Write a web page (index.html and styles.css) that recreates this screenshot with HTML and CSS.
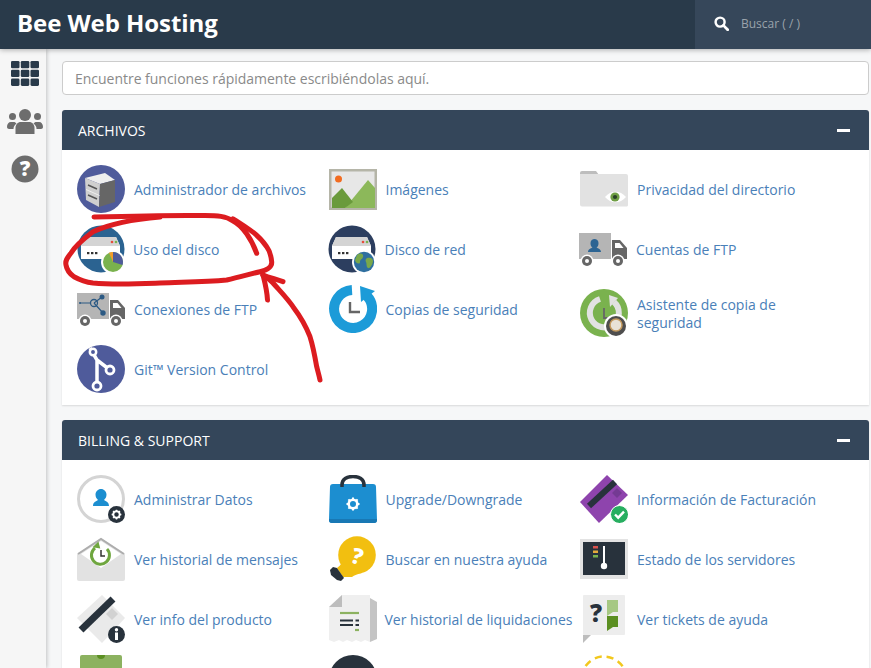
FILE: index.html
```html
<!DOCTYPE html>
<html lang="es">
<head>
<meta charset="utf-8">
<title>Bee Web Hosting</title>
<link rel="stylesheet" href="styles.css">
</head>
<body>
<svg class="defs" width="0" height="0" aria-hidden="true">
  <symbol id="server" viewBox="0 0 48 48">
    <path d="M8 12h31l4 9v13H4V21z" fill="#fff"/>
    <path d="M8 12h31l4 9H4z" fill="#d4d4d4"/>
    <rect x="10" y="27" width="2.400" height="2.200" fill="#333"/><rect x="14" y="27" width="2.400" height="2.200" fill="#333"/><rect x="18" y="27" width="2.400" height="2.200" fill="#333"/>
    <circle cx="35" cy="17" r="1.300" fill="#e74c3c"/><circle cx="39" cy="17" r="1.300" fill="#7ab24e"/>
  </symbol>
  <symbol id="truck" viewBox="0 0 48 48">
    <rect x="0" y="8" width="32" height="26" fill="#b5b5b5"/>
    <path d="M33 15h8l7 8v11H33z" fill="#666"/>
    <path d="M36 18h4.500l4 5H36z" fill="#fff"/>
    <circle cx="8" cy="36" r="6.500" fill="#fff"/><circle cx="8" cy="36" r="5" fill="#666"/><circle cx="8" cy="36" r="2" fill="#fff"/>
    <circle cx="39" cy="36" r="6.500" fill="#fff"/><circle cx="39" cy="36" r="5" fill="#666"/><circle cx="39" cy="36" r="2" fill="#fff"/>
  </symbol>
  <symbol id="gear" viewBox="0 0 16 16">
    <circle cx="8" cy="8" r="4.300" fill="none" stroke="#fff" stroke-width="2.600"/>
    <path d="M8 1.500v13M1.500 8h13M3.400 3.400l9.200 9.200M12.600 3.400l-9.200 9.200" stroke="#fff" stroke-width="2" stroke-dasharray="2.400 8.200"/>
  </symbol>
</svg>

<header class="topbar">
  <div class="brand">Bee Web Hosting</div>
  <div class="quick-search">
    <svg class="search-icon" viewBox="0 0 16 16"><circle cx="6.500" cy="6.500" r="4.800" fill="none" stroke="#fff" stroke-width="2.600"/><path d="M10 10l4.600 4.600" stroke="#fff" stroke-width="3" stroke-linecap="round"/></svg>
    <span class="search-label">Buscar ( / )</span>
  </div>
</header>

<div class="shell">
  <nav class="sidebar">
    <svg class="side-icon grid-icon" viewBox="0 0 28 25">
      <g fill="#293a4a"><rect width="8.500" height="7.300" rx="1.300"/><rect x="9.800" width="8.500" height="7.300" rx="1.300"/><rect x="19.500" width="8.500" height="7.300" rx="1.300"/><rect y="8.800" width="8.500" height="7.300" rx="1.300"/><rect x="9.800" y="8.800" width="8.500" height="7.300" rx="1.300"/><rect x="19.500" y="8.800" width="8.500" height="7.300" rx="1.300"/><rect y="17.600" width="8.500" height="7.300" rx="1.300"/><rect x="9.800" y="17.600" width="8.500" height="7.300" rx="1.300"/><rect x="19.500" y="17.600" width="8.500" height="7.300" rx="1.300"/></g>
    </svg>
    <svg class="side-icon users-icon" viewBox="0 0 36 25">
      <g fill="#6d6d6d"><circle cx="18" cy="6" r="6"/><circle cx="5.500" cy="7.500" r="3.500"/><circle cx="30.500" cy="7.500" r="3.500"/><path d="M8.500 25v-6c0-4 3-6 5-6h9c2 0 5 2 5 6v6z"/><path d="M0 18c0-3 1.500-5 4-5h3.500c1 .6 1.500 1 2 1.500-2 1.500-3 3-3 5.500H2c-1 0-2-1-2-2zM36 18c0-3-1.500-5-4-5h-3.500c-1 .6-1.500 1-2 1.500 2 1.500 3 3 3 5.500H34c1 0 2-1 2-2z"/></g>
    </svg>
    <svg class="side-icon help-icon" viewBox="0 0 28 28"><circle cx="14" cy="14" r="13.500" fill="#6d6d6d"/><text x="14" y="21" text-anchor="middle" class="help-mark">?</text></svg>
  </nav>

  <main class="content">
    <input class="filter" type="text" placeholder="Encuentre funciones rápidamente escribiéndolas aquí.">

    <section class="panel">
      <div class="panel-head"><h2>ARCHIVOS</h2><span class="collapse"></span></div>
      <div class="panel-body">
        <a class="item">
          <svg class="ico" viewBox="0 0 48 48"><circle cx="24" cy="24" r="24" fill="#4f5b9b"/><path d="M8 13l20-5 10 7-15 4z" fill="#eee"/><path d="M8 13l15 6-1 23-13-7z" fill="#cfcfcf"/><path d="M23 19l15-4v22l-16 5z" fill="#666"/><path d="M11 20l9 4M11 30l9 4" stroke="#555" stroke-width="1.500"/><path d="M9 24.500l13.500 6" stroke="#eee" stroke-width="1"/></svg>
          <span>Administrador de archivos</span>
        </a>
        <a class="item">
          <svg class="ico" viewBox="0 0 48 48"><rect y="4" width="48" height="41" fill="#b5b5a8"/><rect x="2.500" y="6.500" width="43" height="36" fill="#e7e7e7"/><circle cx="9.500" cy="14" r="3.500" fill="#f26c21"/><path d="M16 43l23-28 7 8v20z" fill="#8cb85a"/><path d="M3 43V33l10-10 11 14-8 6z" fill="#6a9a3c"/></svg>
          <span>Imágenes</span>
        </a>
        <a class="item">
          <svg class="ico" viewBox="0 0 48 48"><path d="M0 8a2 2 0 0 1 2-2h14l3 4H0z" fill="#bdbdbd"/><path d="M0 9h46a2 2 0 0 1 2 2v29a1.500 1.500 0 0 1-2 1.500H2a2 2 0 0 1-2-2z" fill="#e2e2e2"/><path d="M25 32c6-7 15-7 21 0-6 7-15 7-21 0z" fill="#fff"/><circle cx="35" cy="32" r="4.600" fill="#6f9e44"/><circle cx="35" cy="32" r="2.100" fill="#294027"/></svg>
          <span>Privacidad del directorio</span>
        </a>

        <a class="item tight">
          <svg class="ico" viewBox="0 0 48 48"><circle cx="24" cy="24" r="23.500" fill="#2b6391"/><use href="#server" width="48" height="48"/><circle cx="36" cy="37" r="12" fill="#fff"/><circle cx="36" cy="37" r="10" fill="#7ab24e"/><path d="M36 37V27a10 10 0 0 1 9.500 13z" fill="#4f5b9b"/><path d="M36 37V27a10 10 0 0 0-4 .8z" fill="#f39c2c"/></svg>
          <span>Uso del disco</span>
        </a>
        <a class="item shift">
          <svg class="ico" viewBox="0 0 48 48"><circle cx="24" cy="24" r="23.500" fill="#2c3e5f"/><use href="#server" width="48" height="48"/><circle cx="36" cy="37" r="12" fill="#fff"/><circle cx="36" cy="37" r="10.200" fill="#2f6f9f"/><path d="M29 30c4-3 7-1 6 2s-3 2-3 5-5 1-5-2zM39 33c3-1 6 0 6 3s-3 8-5 7-1-4-2-6 0-3 1-4z" fill="#79a84a"/></svg>
          <span>Disco de red</span>
        </a>
        <a class="item shift">
          <svg class="ico" viewBox="0 0 48 48"><use href="#truck" width="48" height="48"/><path d="M9 27c0-3 3-3.500 4.500-4.500-1.500-1-2-2.500-2-4.500 0-2.500 2-4 4-4s4 1.500 4 4c0 2-.5 3.500-2 4.500 1.500 1 4.500 1.500 4.500 4.500z" fill="#2c6493"/></svg>
          <span>Cuentas de FTP</span>
        </a>

        <a class="item">
          <svg class="ico" viewBox="0 0 48 48"><use href="#truck" width="48" height="48"/><path d="M3 18h11M17 18l8-6M17 18l9 10" stroke="#2c5a84" stroke-width="1.200" fill="none"/><circle cx="17" cy="18" r="3.500" fill="none" stroke="#2c5a84" stroke-width="1.300"/><circle cx="25" cy="12" r="2.500" fill="#2c5a84"/><circle cx="26" cy="28" r="2.700" fill="#2c5a84"/><circle cx="3" cy="18" r="1" fill="#2c5a84"/></svg>
          <span>Conexiones de FTP</span>
        </a>
        <a class="item">
          <svg class="ico" viewBox="0 0 48 48"><path d="M23 5A19 19 0 1 0 38 11" fill="none" stroke="#1c9bd8" stroke-width="10"/><path d="M31 1l15 5-14 11z" fill="#1c9bd8"/><path d="M21 17v10h10" fill="none" stroke="#666" stroke-width="2.400"/></svg>
          <span>Copias de seguridad</span>
        </a>
        <a class="item low">
          <svg class="ico" viewBox="0 0 48 48"><circle cx="24" cy="24" r="24" fill="#7ab24e"/><path d="M20 10A14.500 14.500 0 1 0 34 13" fill="none" stroke="#e2e2e2" stroke-width="6"/><path d="M29 6l9 3-8 9z" fill="#e2e2e2"/><path d="M24 19v10h9" fill="none" stroke="#666" stroke-width="1.800"/><circle cx="36" cy="37" r="12" fill="#fff"/><circle cx="36" cy="37" r="10" fill="#4e4e4e"/><circle cx="36" cy="36" r="6" fill="#e8e2d6" stroke="#c49a5e" stroke-width="1.500"/></svg>
          <span>Asistente de copia de seguridad</span>
        </a>

        <a class="item">
          <svg class="ico" viewBox="0 0 48 48"><circle cx="24" cy="24" r="24" fill="#4f5b9b"/><path d="M13 3l7 12v27M20 15l13 10" fill="none" stroke="#fff" stroke-width="3.500"/><circle cx="16" cy="7" r="3.200" fill="#4f5b9b" stroke="#fff" stroke-width="2.500"/><circle cx="33" cy="25" r="4" fill="#4f5b9b" stroke="#fff" stroke-width="2.800"/><circle cx="20" cy="41" r="4" fill="#4f5b9b" stroke="#fff" stroke-width="2.800"/></svg>
          <span>Git™ Version Control</span>
        </a>
      </div>
    </section>

    <section class="panel">
      <div class="panel-head"><h2>BILLING &amp; SUPPORT</h2><span class="collapse"></span></div>
      <div class="panel-body">
        <a class="item">
          <svg class="ico" viewBox="0 0 48 48"><circle cx="24" cy="24" r="22.500" fill="none" stroke="#d4d4d4" stroke-width="3"/><path d="M16 31c0-4 3-4.500 5-6-1.500-1.500-2.500-3-2.500-5.500 0-3 2.500-5.500 5.500-5.500s5.500 2.500 5.500 5.500c0 2.500-1 4-2.500 5.500 2 1.500 5 2 5 6z" fill="#1c8ed0"/><circle cx="39.500" cy="39.500" r="8.500" fill="#28323c"/><use href="#gear" x="33.500" y="33.500" width="12" height="12"/></svg>
          <span>Administrar Datos</span>
        </a>
        <a class="item">
          <svg class="ico" viewBox="0 0 48 48"><path d="M1 12a3 3 0 0 1 3-3h40a3 3 0 0 1 3 3l1 33a3 3 0 0 1-3 3H3a3 3 0 0 1-3-3z" fill="#1c8ed0"/><path d="M0 44h48v1a3 3 0 0 1-3 3H3a3 3 0 0 1-3-3z" fill="#1878b4"/><path d="M13 12V10C13 4 18 1.500 24 1.500S35 4 35 10v2" fill="none" stroke="#28323c" stroke-width="3.500"/><use href="#gear" x="16" y="21" width="16" height="16"/></svg>
          <span>Upgrade/Downgrade</span>
        </a>
        <a class="item">
          <svg class="ico" viewBox="0 0 48 48"><path d="M27 0l21 20-29 28L0 27z" fill="#8e44ad"/><path d="M6 28L32 4" stroke="#28323c" stroke-width="6" transform="translate(3 3)"/><path d="M32 18l5-5 5 5-5 5z" fill="#743a93"/><circle cx="39.500" cy="39.500" r="9" fill="#27ae60" stroke="#fff" stroke-width="1"/><path d="M35 39.500l3.200 3.200 5.800-6" fill="none" stroke="#fff" stroke-width="2.400"/></svg>
          <span>Información de Facturación</span>
        </a>

        <a class="item">
          <svg class="ico" viewBox="0 0 48 48"><path d="M0 19L24 3l24 16v25a2 2 0 0 1-2 2H2a2 2 0 0 1-2-2z" fill="#e2e2e2"/><path d="M1 19L24 4l23 15" fill="none" stroke="#adadad" stroke-width="2"/><path d="M24 6l20 13-20 14L4 19z" fill="#fff"/><path d="M18 13A9 9 0 1 0 30 14" fill="none" stroke="#6fa63f" stroke-width="3"/><path d="M16 8l7 2-5 6z" fill="#6fa63f" transform="rotate(60 20 12)"/><path d="M24 15v6h4" fill="none" stroke="#333" stroke-width="1.500"/></svg>
          <span>Ver historial de mensajes</span>
        </a>
        <a class="item">
          <svg class="ico" viewBox="0 0 48 48"><path d="M14 42l-6-9c2-2 4-3 5-6l20 11c-4 1-8 2-10 4z" fill="#f2bf10"/><circle cx="28" cy="20" r="18.800" fill="#f2bf10"/><path d="M8 33l7 10-3 3-4-1-6-5-1-5 3-3z" fill="#28323c"/><text x="28" y="29" text-anchor="middle" class="bulb-mark" transform="rotate(18 28 22)">?</text></svg>
          <span>Buscar en nuestra ayuda</span>
        </a>
        <a class="item">
          <svg class="ico" viewBox="0 0 48 48"><path d="M0 4h48v40H0z" fill="#e3e3e3"/><rect x="3" y="7" width="42" height="33" fill="#28323c"/><rect x="13" y="11" width="5" height="2.500" fill="#d9534f"/><rect x="13" y="15.500" width="5" height="2.500" fill="#e5a93b"/><rect x="13" y="20" width="5" height="2.500" fill="#7ab24e"/><rect x="23" y="11" width="2" height="17" fill="#fff"/><circle cx="24" cy="31" r="3.200" fill="#fff"/></svg>
          <span>Estado de los servidores</span>
        </a>

        <a class="item">
          <svg class="ico" viewBox="0 0 48 48"><path d="M25 0l23 23-23 25L0 23z" fill="#eaeaea"/><path d="M4 35L36 4" stroke="#28323c" stroke-width="7"/><path d="M35 13l6 6-6 6-6-6z" fill="#d2d2d2"/><circle cx="39.500" cy="39.500" r="8.500" fill="#28323c"/><circle cx="39.500" cy="34.800" r="1.700" fill="#fff"/><rect x="38" y="37.500" width="3" height="7.500" fill="#fff"/></svg>
          <span>Ver info del producto</span>
        </a>
        <a class="item tight">
          <svg class="ico" viewBox="0 0 48 48"><path d="M13 0h28v47l-5-2-4 2-5-2-4 2-5-2-4 2-4-2-5 2L0 45V12z" fill="#efefef"/><path d="M13 0v12H0z" fill="#bdbdbd"/><path d="M41 3l7 4v37l-7 3z" fill="#c4c4c4"/><path d="M11 18h19" stroke="#8cb260" stroke-width="2.200"/><path d="M11 25.500h13M11 30h13M26.500 25.500h3.500M26.500 30h3.500" stroke="#28323c" stroke-width="2.200"/><path d="M26 35h4" stroke="#8cb260" stroke-width="2.200"/></svg>
          <span>Ver historial de liquidaciones</span>
        </a>
        <a class="item">
          <svg class="ico" viewBox="0 0 48 48"><rect x="3" y="0" width="42" height="40" rx="1" fill="#ededed"/><path d="M3 40h8l-8 8z" fill="#bdbdbd"/><text x="16" y="27" text-anchor="middle" class="ticket-mark">?</text><path d="M27 5h11v12h-11z" fill="#a6c883"/><path d="M27 17h6l-6 4z" fill="#a6c883"/><path d="M27 21h11v11H33l-6 4z" fill="#5b8f22"/></svg>
          <span>Ver tickets de ayuda</span>
        </a>

        <a class="item">
          <svg class="ico" viewBox="0 0 48 48"><rect x="3" y="0" width="42" height="48" rx="2" fill="#8cb260"/><circle cx="24" cy="0" r="4" fill="#5b8f22"/></svg>
        </a>
        <a class="item">
          <svg class="ico" viewBox="0 0 48 48"><circle cx="24" cy="24" r="24" fill="#28323c"/></svg>
        </a>
        <a class="item">
          <svg class="ico" viewBox="0 0 48 48"><circle cx="24" cy="24" r="22.500" fill="none" stroke="#f2c81e" stroke-width="2.500" stroke-dasharray="7 5"/></svg>
        </a>
      </div>
    </section>
  </main>
</div>

<svg class="scribble" viewBox="0 0 871 668" aria-hidden="true">
  <g fill="none" stroke="#dc1c20" stroke-width="5" stroke-linecap="round" stroke-linejoin="round">
    <path d="M256.700 253.300C252 240 243 226 233 221C226 216 217 215.500 205 215.500C170 215 130 216 94 217"/>
    <path d="M160 217C135 219 110 224 93 231.700C82 240 75 246 71 253C67 258 65 261 66 265C67 271 70 274 74 276.700C80 280 85 282 93 283C115 285 135 284 160 283C185 282 205 282 226.700 280C240 277 250 274 260 271.700C267 270 272 267 271.700 262C271 255 270 251 266.700 246.700C262 240 256 234 250 230C244 226 238 222 233 219"/>
    <path d="M320 380C319 375 318 372 316.700 366.700C315 357 313 346 310 336.700C306 326 300 316 293 306.700C287 298 280 291 273 283C270 280 266 277 263 275"/>
    <path d="M263 275C270 278 276 279 283 281.700"/>
    <path d="M263 275C265 283 267 290 267.500 300"/>
  </g>
</svg>
</body>
</html>
```

FILE: styles.css
```css
* { box-sizing: border-box; }

html, body {
  margin: 0;
  height: 668px;
  overflow: hidden;
}

body {
  position: relative;
  background: #f6f7f8;
  font-family: "Open Sans", "Liberation Sans", sans-serif;
  color: #333;
}

.defs { position: absolute; }

.topbar {
  display: flex;
  justify-content: space-between;
  height: 49px;
  background: #293a4a;
  box-shadow: 0 1px 5px rgba(0, 0, 0, .3);
  position: relative;
  z-index: 2;
}

.brand {
  padding-left: 17px;
  font-size: 24px;
  font-weight: 700;
  letter-spacing: -0.07px;
  line-height: 46px;
  color: #fff;
}

.quick-search {
  display: flex;
  align-items: center;
  width: 176px;
  padding-left: 19px;
  padding-bottom: 2px;
  gap: 12px;
  background: #36475a;
}

.search-icon { width: 15px; height: 15px; }

.search-label {
  font-size: 12px;
  color: #9aa3ab;
}

.shell { display: flex; }

.sidebar {
  display: flex;
  flex-direction: column;
  align-items: center;
  flex: none;
  width: 46px;
  height: 619px;
  padding-top: 12px;
  padding-left: 4px;
  background: #f6f6f6;
  box-shadow: 1px 0 4px rgba(0, 0, 0, .22);
}

.side-icon { display: block; flex: none; }
.grid-icon { width: 28px; height: 25px; margin-bottom: 23px; }
.users-icon { width: 36px; height: 25px; margin-bottom: 21px; }
.help-icon { width: 28px; height: 28px; }

.help-mark {
  font-size: 21px;
  font-weight: 800;
  fill: #fff;
}

.bulb-mark {
  font-size: 22px;
  font-weight: 800;
  fill: #fff;
}

.ticket-mark {
  font-size: 24px;
  font-weight: 800;
  fill: #28323c;
}

.content {
  flex: 1;
  min-width: 0;
  padding: 12px 2px 0 16px;
}

.filter {
  display: block;
  width: 100%;
  height: 34px;
  padding: 0 12px;
  border: 1px solid #ccc;
  border-radius: 4px;
  background: #fff;
  font: 14px "Open Sans", "Liberation Sans", sans-serif;
  letter-spacing: -0.02px;
}

.filter::placeholder { color: #8a8a8a; opacity: 1; }

.panel {
  margin-top: 15px;
  background: #fff;
  border-radius: 3px 3px 0 0;
  box-shadow: 0 1px 2px rgba(0, 0, 0, .12);
}

.panel-head {
  display: flex;
  align-items: center;
  justify-content: space-between;
  height: 40px;
  padding: 0 19px 0 16px;
  background: #34465a;
  border-radius: 3px 3px 0 0;
}

.panel-head h2 {
  margin: 0;
  font-size: 14px;
  font-weight: 400;
  color: #fff;
}

.collapse {
  width: 13px;
  height: 3px;
  background: #fff;
}

.panel-body {
  display: grid;
  grid-template-columns: repeat(3, 251.5px);
  grid-auto-rows: 48px;
  row-gap: 12px;
  padding: 15px 0 12px 15px;
}

.item {
  display: flex;
  align-items: center;
  gap: 9px;
  height: 48px;
  font-size: 14px;
  line-height: 18px;
  color: #4a80b8;
}

.item span {
  width: 190px;
  padding-top: 2px;
}

.item.tight { gap: 8px; }
.item.shift .ico { margin-left: -1px; }

.item.low {
  height: 52px;
  padding-top: 4px;
  margin-bottom: -4px;
}

.ico {
  display: block;
  flex: none;
  width: 48px;
  height: 48px;
}

.scribble {
  position: absolute;
  left: 0;
  top: 0;
  width: 871px;
  height: 668px;
  z-index: 3;
  pointer-events: none;
}
```
